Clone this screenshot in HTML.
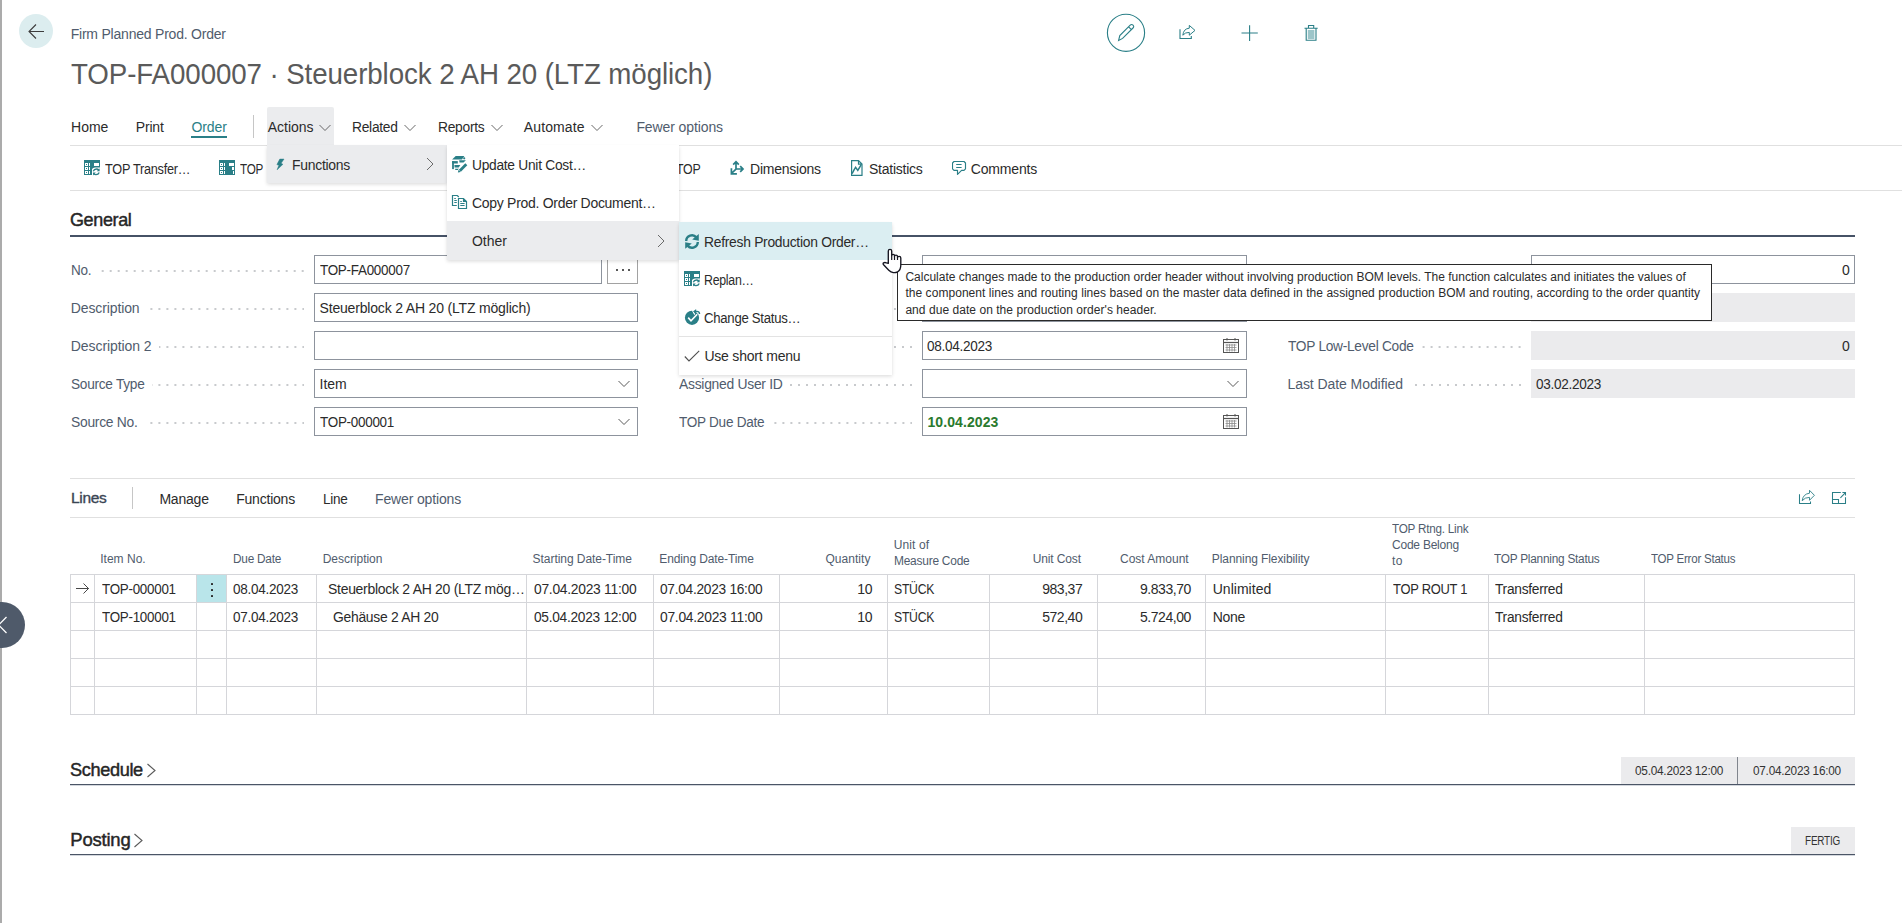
<!DOCTYPE html>
<html><head><meta charset="utf-8"><style>
html,body{margin:0;padding:0;background:#fff;width:1902px;height:923px;overflow:hidden;position:relative}
body{font-family:"Liberation Sans",sans-serif}
.t{position:absolute;white-space:nowrap}
.r{position:absolute}
</style></head><body>
<div class="r" style="left:0px;top:0px;width:2px;height:923px;background:#ababab"></div>
<div class="r" style="left:19px;top:14px;width:34px;height:34px;border-radius:50%;background:#dcedef"></div>
<svg class="r" style="left:27px;top:23px" width="18" height="17" viewBox="0 0 18 17"><path d="M2 8.5H17M9 1.5L2 8.5L9 15.5" fill="none" stroke="#3d3d3d" stroke-width="1.1"/></svg>
<div class="t" style="left:70.70px;top:24.65px;font-size:14px;line-height:18px;color:#505c6d;letter-spacing:-0.216px;">Firm Planned Prod. Order</div>
<div class="t" style="left:70.70px;top:53.90px;font-size:30px;line-height:39px;color:#5a5a5a;letter-spacing:-0.100px;transform:scaleX(0.9235);transform-origin:0 0;">TOP-FA000007 · Steuerblock 2 AH 20 (LTZ möglich)</div>
<svg class="r" style="left:1100px;top:8px" width="240" height="50" viewBox="0 0 240 50"><circle cx="26" cy="24.8" r="18.6" fill="none" stroke="#2a7f87" stroke-width="1.1"/><path d="M18.6 32.4L19.8 27.6L30.2 17.2Q31.6 15.8 33 17.2Q34.4 18.6 33 20L22.6 30.4Z M28.6 18.8L31.4 21.6" fill="none" stroke="#2a7f87" stroke-width="1.1"/><path d="M80 21.3V30.5H91.3V28" fill="none" stroke="#2a7f87" stroke-width="1.1"/><path d="M82.8 27.2Q83.6 20.6 89.3 20.2V17.4L95 22.4L89.3 27.2V24.4Q85.2 24.2 82.8 27.2Z" fill="none" stroke="#2a7f87" stroke-width="1" stroke-linejoin="miter"/><path d="M141.5 25H157.8M149.6 17.2V33" stroke="#2a7f87" stroke-width="1.1"/><path d="M204.5 20.3H217.7M208.5 20.3V17.5H213.7V20.3M206.2 20.3V32.3H216V20.3" fill="none" stroke="#2a7f87" stroke-width="1.1"/><rect x="207.8" y="22" width="6.6" height="9" fill="#9cc5c9"/></svg>
<div class="t" style="left:71.10px;top:117.75px;font-size:14px;line-height:18px;color:#2b2b2b;letter-spacing:-0.048px;">Home</div>
<div class="t" style="left:135.80px;top:117.75px;font-size:14px;line-height:18px;color:#2b2b2b;letter-spacing:-0.196px;">Print</div>
<div class="t" style="left:191.40px;top:117.75px;font-size:14px;line-height:18px;color:#2a7f87;letter-spacing:-0.071px;">Order</div>
<div class="r" style="left:191px;top:136px;width:36px;height:2px;background:#2a7f87"></div>
<div class="r" style="left:253px;top:115px;width:1px;height:23px;background:#c6c6c6"></div>
<div class="r" style="left:267px;top:107px;width:67px;height:38px;background:#ebecee;border-radius:2px 2px 0 0"></div>
<div class="t" style="left:267.70px;top:117.75px;font-size:14px;line-height:18px;color:#2b2b2b;letter-spacing:-0.002px;">Actions</div>
<div class="t" style="left:352.40px;top:117.75px;font-size:14px;line-height:18px;color:#2b2b2b;letter-spacing:-0.280px;transform:scaleX(0.9856);transform-origin:0 0;">Related</div>
<div class="t" style="left:437.50px;top:117.75px;font-size:14px;line-height:18px;color:#2b2b2b;letter-spacing:-0.280px;transform:scaleX(0.9865);transform-origin:0 0;">Reports</div>
<div class="t" style="left:523.80px;top:117.75px;font-size:14px;line-height:18px;color:#2b2b2b;letter-spacing:0.111px;">Automate</div>
<div class="t" style="left:636.40px;top:117.75px;font-size:14px;line-height:18px;color:#505c6d;letter-spacing:-0.102px;">Fewer options</div>
<svg class="r" style="left:319px;top:124px" width="12" height="8" viewBox="0 0 12 8"><path d="M0.5 1L6 6.5L11.5 1" fill="none" stroke="#585858" stroke-width="0.9"/></svg>
<svg class="r" style="left:404px;top:124px" width="12" height="8" viewBox="0 0 12 8"><path d="M0.5 1L6 6.5L11.5 1" fill="none" stroke="#585858" stroke-width="0.9"/></svg>
<svg class="r" style="left:491px;top:124px" width="12" height="8" viewBox="0 0 12 8"><path d="M0.5 1L6 6.5L11.5 1" fill="none" stroke="#585858" stroke-width="0.9"/></svg>
<svg class="r" style="left:591px;top:124px" width="12" height="8" viewBox="0 0 12 8"><path d="M0.5 1L6 6.5L11.5 1" fill="none" stroke="#585858" stroke-width="0.9"/></svg>
<div class="r" style="left:70px;top:145px;width:1832px;height:1px;background:#e0e0e0"></div>
<div class="r" style="left:70px;top:190px;width:1832px;height:1px;background:#e0e0e0"></div>
<div class="t" style="left:104.90px;top:160.15px;font-size:14px;line-height:18px;color:#2b2b2b;letter-spacing:-0.280px;transform:scaleX(0.9071);transform-origin:0 0;">TOP Transfer…</div>
<div class="t" style="left:239.50px;top:160.15px;font-size:14px;line-height:18px;color:#2b2b2b;letter-spacing:-0.280px;transform:scaleX(0.8332);transform-origin:0 0;">TOP</div>
<div class="t" style="left:676.00px;top:160.15px;font-size:14px;line-height:18px;color:#2b2b2b;letter-spacing:-0.280px;transform:scaleX(0.8832);transform-origin:0 0;">TOP</div>
<div class="t" style="left:750.00px;top:160.15px;font-size:14px;line-height:18px;color:#2b2b2b;letter-spacing:-0.226px;">Dimensions</div>
<div class="t" style="left:869.00px;top:160.15px;font-size:14px;line-height:18px;color:#2b2b2b;letter-spacing:-0.246px;">Statistics</div>
<div class="t" style="left:970.70px;top:160.15px;font-size:14px;line-height:18px;color:#2b2b2b;letter-spacing:-0.154px;">Comments</div>
<div class="t" style="left:70.30px;top:208.49px;font-size:18.5px;line-height:24px;color:#262626;letter-spacing:-0.370px;transform:scaleX(0.9718);transform-origin:0 0;-webkit-text-stroke:0.45px #262626;">General</div>
<div class="r" style="left:70px;top:235px;width:1785px;height:2px;background:#465266"></div>
<div class="t" style="left:70.80px;top:261.15px;font-size:14px;line-height:18px;color:#505c6d;letter-spacing:-0.280px;transform:scaleX(0.9658);transform-origin:0 0;">No.</div>
<div class="r" style="left:98.3px;top:270px;width:205.7px;height:2px;background-image:linear-gradient(90deg,transparent 6px,#c8cacd 6px);background-size:8px 2px;background-position:right top"></div>
<div class="r" style="left:314px;top:255px;width:286px;height:27px;background:#fff;border:1px solid #8d939d"></div>
<div class="r" style="left:607px;top:255px;width:29px;height:27px;background:#fff;border:1px solid #a2a2a2"></div>
<div class="r" style="left:615.8px;top:269.4px;width:1.9px;height:1.9px;background:#222;border-radius:50%"></div>
<div class="r" style="left:621.7px;top:269.4px;width:1.9px;height:1.9px;background:#222;border-radius:50%"></div>
<div class="r" style="left:627.7px;top:269.4px;width:1.9px;height:1.9px;background:#222;border-radius:50%"></div>
<div class="t" style="left:319.50px;top:261.15px;font-size:14px;line-height:18px;color:#2b2b2b;letter-spacing:-0.280px;transform:scaleX(0.9592);transform-origin:0 0;">TOP-FA000007</div>
<div class="t" style="left:70.80px;top:299.15px;font-size:14px;line-height:18px;color:#505c6d;letter-spacing:-0.122px;">Description</div>
<div class="r" style="left:146.6px;top:308px;width:157.4px;height:2px;background-image:linear-gradient(90deg,transparent 6px,#c8cacd 6px);background-size:8px 2px;background-position:right top"></div>
<div class="r" style="left:314px;top:293px;width:322px;height:27px;background:#fff;border:1px solid #8d939d"></div>
<div class="t" style="left:319.50px;top:299.15px;font-size:14px;line-height:18px;color:#2b2b2b;letter-spacing:-0.176px;">Steuerblock 2 AH 20 (LTZ möglich)</div>
<div class="t" style="left:70.80px;top:337.15px;font-size:14px;line-height:18px;color:#505c6d;letter-spacing:-0.075px;">Description 2</div>
<div class="r" style="left:158.6px;top:346px;width:145.4px;height:2px;background-image:linear-gradient(90deg,transparent 6px,#c8cacd 6px);background-size:8px 2px;background-position:right top"></div>
<div class="r" style="left:314px;top:331px;width:322px;height:27px;background:#fff;border:1px solid #8d939d"></div>
<div class="t" style="left:70.80px;top:375.15px;font-size:14px;line-height:18px;color:#505c6d;letter-spacing:-0.280px;transform:scaleX(0.9770);transform-origin:0 0;">Source Type</div>
<div class="r" style="left:151.6px;top:384px;width:152.4px;height:2px;background-image:linear-gradient(90deg,transparent 6px,#c8cacd 6px);background-size:8px 2px;background-position:right top"></div>
<div class="r" style="left:314px;top:369px;width:322px;height:27px;background:#fff;border:1px solid #8d939d"></div>
<div class="t" style="left:319.50px;top:375.15px;font-size:14px;line-height:18px;color:#2b2b2b;letter-spacing:-0.009px;">Item</div>
<svg class="r" style="left:618px;top:380px" width="12" height="8" viewBox="0 0 12 8"><path d="M0.5 1L6 6.5L11.5 1" fill="none" stroke="#5a5a5a" stroke-width="1"/></svg>
<div class="t" style="left:70.80px;top:413.15px;font-size:14px;line-height:18px;color:#505c6d;letter-spacing:-0.280px;transform:scaleX(0.9895);transform-origin:0 0;">Source No.</div>
<div class="r" style="left:144.6px;top:422px;width:159.4px;height:2px;background-image:linear-gradient(90deg,transparent 6px,#c8cacd 6px);background-size:8px 2px;background-position:right top"></div>
<div class="r" style="left:314px;top:407px;width:322px;height:27px;background:#fff;border:1px solid #8d939d"></div>
<div class="t" style="left:319.50px;top:413.15px;font-size:14px;line-height:18px;color:#2b2b2b;letter-spacing:-0.280px;transform:scaleX(0.9602);transform-origin:0 0;">TOP-000001</div>
<svg class="r" style="left:618px;top:418px" width="12" height="8" viewBox="0 0 12 8"><path d="M0.5 1L6 6.5L11.5 1" fill="none" stroke="#5a5a5a" stroke-width="1"/></svg>
<div class="r" style="left:922px;top:255px;width:323px;height:27px;background:#fff;border:1px solid #8d939d"></div>
<div class="r" style="left:1118px;top:264px;width:1px;height:1px;background:#777"></div>
<div class="r" style="left:1121px;top:264px;width:1px;height:1px;background:#777"></div>
<div class="r" style="left:922px;top:293px;width:323px;height:27px;background:#fff;border:1px solid #8d939d"></div>
<div class="r" style="left:880.0px;top:346px;width:32.0px;height:2px;background-image:linear-gradient(90deg,transparent 6px,#c8cacd 6px);background-size:8px 2px;background-position:right top"></div>
<div class="r" style="left:880.0px;top:308px;width:32.0px;height:2px;background-image:linear-gradient(90deg,transparent 6px,#c8cacd 6px);background-size:8px 2px;background-position:right top"></div>
<div class="r" style="left:922px;top:331px;width:323px;height:27px;background:#fff;border:1px solid #8d939d"></div>
<div class="t" style="left:927.40px;top:336.55px;font-size:14px;line-height:18px;color:#2b2b2b;letter-spacing:-0.280px;transform:scaleX(0.9668);transform-origin:0 0;">08.04.2023</div>
<svg class="r" style="left:1223px;top:338px" width="16" height="15" viewBox="0 0 16 15"><rect x="0.5" y="1.5" width="15" height="13" fill="none" stroke="#555" stroke-width="1"/><path d="M0.5 4.5H15.5" stroke="#555" stroke-width="1.2"/><path d="M4 0V2.5M12 0V2.5" stroke="#555"/><path d="M2.5 7h11M2.5 9.5h11M2.5 12h11" stroke="#8a8a8a" stroke-width="0.8"/><path d="M4 6v7.5M6.5 6v7.5M9 6v7.5M11.5 6v7.5" stroke="#8a8a8a" stroke-width="0.8"/></svg>
<div class="t" style="left:679.10px;top:375.15px;font-size:14px;line-height:18px;color:#505c6d;letter-spacing:-0.280px;transform:scaleX(0.9921);transform-origin:0 0;">Assigned User ID</div>
<div class="r" style="left:790.0px;top:384px;width:122.0px;height:2px;background-image:linear-gradient(90deg,transparent 6px,#c8cacd 6px);background-size:8px 2px;background-position:right top"></div>
<div class="r" style="left:922px;top:369px;width:323px;height:27px;background:#fff;border:1px solid #8d939d"></div>
<svg class="r" style="left:1227px;top:380px" width="12" height="8" viewBox="0 0 12 8"><path d="M0.5 1L6 6.5L11.5 1" fill="none" stroke="#5a5a5a" stroke-width="1"/></svg>
<div class="t" style="left:679.10px;top:413.05px;font-size:14px;line-height:18px;color:#505c6d;letter-spacing:-0.280px;transform:scaleX(0.9691);transform-origin:0 0;">TOP Due Date</div>
<div class="r" style="left:771.6px;top:422px;width:140.4px;height:2px;background-image:linear-gradient(90deg,transparent 6px,#c8cacd 6px);background-size:8px 2px;background-position:right top"></div>
<div class="r" style="left:922px;top:407px;width:323px;height:27px;background:#fff;border:1px solid #8d939d"></div>
<div class="t" style="left:927.40px;top:413.05px;font-size:14px;line-height:18px;color:#2a7a2e;font-weight:bold;letter-spacing:0.104px;">10.04.2023</div>
<svg class="r" style="left:1223px;top:414px" width="16" height="15" viewBox="0 0 16 15"><rect x="0.5" y="1.5" width="15" height="13" fill="none" stroke="#555" stroke-width="1"/><path d="M0.5 4.5H15.5" stroke="#555" stroke-width="1.2"/><path d="M4 0V2.5M12 0V2.5" stroke="#555"/><path d="M2.5 7h11M2.5 9.5h11M2.5 12h11" stroke="#8a8a8a" stroke-width="0.8"/><path d="M4 6v7.5M6.5 6v7.5M9 6v7.5M11.5 6v7.5" stroke="#8a8a8a" stroke-width="0.8"/></svg>
<div class="r" style="left:1531px;top:255px;width:322px;height:27px;background:#fff;border:1px solid #8d939d"></div>
<div class="t" style="left:1841.91px;top:260.95px;font-size:14px;line-height:18px;color:#2b2b2b;">0</div>
<div class="r" style="left:1531px;top:293px;width:324px;height:29px;background:#ebebed"></div>
<div class="t" style="left:1287.50px;top:336.85px;font-size:14px;line-height:18px;color:#505c6d;letter-spacing:-0.280px;transform:scaleX(0.9793);transform-origin:0 0;">TOP Low-Level Code</div>
<div class="r" style="left:1420.4px;top:346px;width:100.6px;height:2px;background-image:linear-gradient(90deg,transparent 6px,#c8cacd 6px);background-size:8px 2px;background-position:right top"></div>
<div class="r" style="left:1531px;top:331px;width:324px;height:29px;background:#ebebed"></div>
<div class="t" style="left:1841.91px;top:336.85px;font-size:14px;line-height:18px;color:#2b2b2b;">0</div>
<div class="t" style="left:1287.50px;top:374.85px;font-size:14px;line-height:18px;color:#505c6d;letter-spacing:-0.072px;">Last Date Modified</div>
<div class="r" style="left:1410.0px;top:384px;width:111.0px;height:2px;background-image:linear-gradient(90deg,transparent 6px,#c8cacd 6px);background-size:8px 2px;background-position:right top"></div>
<div class="r" style="left:1531px;top:369px;width:324px;height:29px;background:#ebebed"></div>
<div class="t" style="left:1535.90px;top:374.85px;font-size:14px;line-height:18px;color:#2b2b2b;letter-spacing:-0.280px;transform:scaleX(0.9683);transform-origin:0 0;">03.02.2023</div>
<div class="r" style="left:70px;top:478px;width:1785px;height:1px;background:#e0e0e0"></div>
<div class="t" style="left:70.60px;top:488.43px;font-size:15.5px;line-height:20px;color:#3a4553;letter-spacing:-0.310px;transform:scaleX(0.9997);transform-origin:0 0;-webkit-text-stroke:0.35px #3a4553;">Lines</div>
<div class="r" style="left:132px;top:487px;width:1px;height:22px;background:#c6c6c6"></div>
<div class="t" style="left:159.40px;top:489.95px;font-size:14px;line-height:18px;color:#2b2b2b;letter-spacing:-0.198px;">Manage</div>
<div class="t" style="left:236.20px;top:489.95px;font-size:14px;line-height:18px;color:#2b2b2b;letter-spacing:-0.212px;">Functions</div>
<div class="t" style="left:322.70px;top:489.95px;font-size:14px;line-height:18px;color:#2b2b2b;letter-spacing:-0.280px;transform:scaleX(0.9677);transform-origin:0 0;">Line</div>
<div class="t" style="left:375.00px;top:489.95px;font-size:14px;line-height:18px;color:#505c6d;letter-spacing:-0.144px;">Fewer options</div>
<div class="r" style="left:70px;top:517px;width:1785px;height:1px;background:#e0e0e0"></div>
<svg class="r" style="left:1796px;top:489px" width="54" height="18" viewBox="0 0 54 18"><path d="M3.5 5.2V14.5H14.5V12.4" fill="none" stroke="#2a7f87" stroke-width="1.05"/><path d="M6.2 11.7Q7 5 13.5 4.2V1.3L18.4 6.3L13.5 11.3V8.4Q9 8.2 6.2 11.7Z" fill="none" stroke="#2a7f87" stroke-width="0.9" stroke-linejoin="miter"/><path d="M44.8 3.5H36.5V14.5H49.5V8.2M36.5 10.5H42.5V14.5M44.4 8.9L49 4.1M46.4 3.5H50M49.5 3V6.6" fill="none" stroke="#2a7f87" stroke-width="1.05"/></svg>
<div class="t" style="left:100.20px;top:550.64px;font-size:12px;line-height:16px;color:#505c6d;letter-spacing:0.022px;">Item No.</div>
<div class="t" style="left:232.90px;top:550.64px;font-size:12px;line-height:16px;color:#505c6d;letter-spacing:-0.240px;transform:scaleX(0.9855);transform-origin:0 0;">Due Date</div>
<div class="t" style="left:322.70px;top:550.64px;font-size:12px;line-height:16px;color:#505c6d;letter-spacing:-0.032px;">Description</div>
<div class="t" style="left:532.60px;top:550.64px;font-size:12px;line-height:16px;color:#505c6d;letter-spacing:-0.056px;">Starting Date-Time</div>
<div class="t" style="left:659.30px;top:550.64px;font-size:12px;line-height:16px;color:#505c6d;letter-spacing:-0.117px;">Ending Date-Time</div>
<div class="t" style="left:825.50px;top:550.64px;font-size:12px;line-height:16px;color:#505c6d;letter-spacing:0.030px;">Quantity</div>
<div class="t" style="left:893.70px;top:536.64px;font-size:12px;line-height:16px;color:#505c6d;letter-spacing:0.103px;">Unit of</div>
<div class="t" style="left:893.70px;top:552.54px;font-size:12px;line-height:16px;color:#505c6d;letter-spacing:-0.240px;transform:scaleX(0.9952);transform-origin:0 0;">Measure Code</div>
<div class="t" style="left:1032.80px;top:550.64px;font-size:12px;line-height:16px;color:#505c6d;letter-spacing:-0.143px;">Unit Cost</div>
<div class="t" style="left:1120.00px;top:550.64px;font-size:12px;line-height:16px;color:#505c6d;letter-spacing:0.000px;">Cost Amount</div>
<div class="t" style="left:1211.80px;top:550.64px;font-size:12px;line-height:16px;color:#505c6d;letter-spacing:-0.088px;">Planning Flexibility</div>
<div class="t" style="left:1392.00px;top:520.54px;font-size:12px;line-height:16px;color:#505c6d;letter-spacing:-0.240px;transform:scaleX(0.9749);transform-origin:0 0;">TOP Rtng. Link</div>
<div class="t" style="left:1392.00px;top:537.24px;font-size:12px;line-height:16px;color:#505c6d;letter-spacing:-0.228px;">Code Belong</div>
<div class="t" style="left:1392.00px;top:553.14px;font-size:12px;line-height:16px;color:#505c6d;letter-spacing:0.293px;">to</div>
<div class="t" style="left:1493.90px;top:550.64px;font-size:12px;line-height:16px;color:#505c6d;letter-spacing:-0.240px;transform:scaleX(0.9851);transform-origin:0 0;">TOP Planning Status</div>
<div class="t" style="left:1650.50px;top:550.64px;font-size:12px;line-height:16px;color:#505c6d;letter-spacing:-0.240px;transform:scaleX(0.9604);transform-origin:0 0;">TOP Error Status</div>
<div class="r" style="left:70px;top:574px;width:1785px;height:1px;background:#d5d6da"></div>
<div class="r" style="left:70px;top:602px;width:1785px;height:1px;background:#d5d6da"></div>
<div class="r" style="left:70px;top:630px;width:1785px;height:1px;background:#d5d6da"></div>
<div class="r" style="left:70px;top:658px;width:1785px;height:1px;background:#d5d6da"></div>
<div class="r" style="left:70px;top:686px;width:1785px;height:1px;background:#d5d6da"></div>
<div class="r" style="left:70px;top:714px;width:1785px;height:1px;background:#d5d6da"></div>
<div class="r" style="left:70px;top:574px;width:1px;height:141px;background:#d5d6da"></div>
<div class="r" style="left:94px;top:574px;width:1px;height:141px;background:#d5d6da"></div>
<div class="r" style="left:196px;top:574px;width:1px;height:141px;background:#d5d6da"></div>
<div class="r" style="left:226px;top:574px;width:1px;height:141px;background:#d5d6da"></div>
<div class="r" style="left:316px;top:574px;width:1px;height:141px;background:#d5d6da"></div>
<div class="r" style="left:526px;top:574px;width:1px;height:141px;background:#d5d6da"></div>
<div class="r" style="left:653px;top:574px;width:1px;height:141px;background:#d5d6da"></div>
<div class="r" style="left:779px;top:574px;width:1px;height:141px;background:#d5d6da"></div>
<div class="r" style="left:887px;top:574px;width:1px;height:141px;background:#d5d6da"></div>
<div class="r" style="left:989px;top:574px;width:1px;height:141px;background:#d5d6da"></div>
<div class="r" style="left:1097px;top:574px;width:1px;height:141px;background:#d5d6da"></div>
<div class="r" style="left:1205px;top:574px;width:1px;height:141px;background:#d5d6da"></div>
<div class="r" style="left:1385px;top:574px;width:1px;height:141px;background:#d5d6da"></div>
<div class="r" style="left:1488px;top:574px;width:1px;height:141px;background:#d5d6da"></div>
<div class="r" style="left:1644px;top:574px;width:1px;height:141px;background:#d5d6da"></div>
<div class="r" style="left:1854px;top:574px;width:1px;height:141px;background:#d5d6da"></div>
<div class="r" style="left:197px;top:575px;width:29px;height:27px;background:#b9e5ea"></div>
<div class="r" style="left:211px;top:583.4px;width:2px;height:2px;background:#2b2b2b;border-radius:0.5px"></div>
<div class="r" style="left:211px;top:589.1px;width:2px;height:2px;background:#2b2b2b;border-radius:0.5px"></div>
<div class="r" style="left:211px;top:594.8px;width:2px;height:2px;background:#2b2b2b;border-radius:0.5px"></div>
<svg class="r" style="left:75px;top:582px" width="16" height="14" viewBox="0 0 16 14"><path d="M1 6.5H13.5M8.5 1.5L13.5 6.5L8.5 11.5" fill="none" stroke="#333" stroke-width="0.9"/></svg>
<div class="t" style="left:102.00px;top:579.85px;font-size:14px;line-height:18px;color:#2b2b2b;letter-spacing:-0.280px;transform:scaleX(0.9563);transform-origin:0 0;">TOP-000001</div>
<div class="t" style="left:233.30px;top:579.85px;font-size:14px;line-height:18px;color:#2b2b2b;letter-spacing:-0.280px;transform:scaleX(0.9653);transform-origin:0 0;">08.04.2023</div>
<div class="t" style="left:327.60px;top:579.85px;font-size:14px;line-height:18px;color:#2b2b2b;letter-spacing:-0.280px;transform:scaleX(0.9979);transform-origin:0 0;">Steuerblock 2 AH 20 (LTZ mög…</div>
<div class="t" style="left:533.70px;top:579.85px;font-size:14px;line-height:18px;color:#2b2b2b;letter-spacing:-0.280px;transform:scaleX(0.9890);transform-origin:0 0;">07.04.2023 11:00</div>
<div class="t" style="left:660.00px;top:579.85px;font-size:14px;line-height:18px;color:#2b2b2b;letter-spacing:-0.280px;transform:scaleX(0.9792);transform-origin:0 0;">07.04.2023 16:00</div>
<div class="t" style="left:857.33px;top:579.85px;font-size:14px;line-height:18px;color:#2b2b2b;letter-spacing:-0.300px;">10</div>
<div class="t" style="left:894.40px;top:579.85px;font-size:14px;line-height:18px;color:#2b2b2b;letter-spacing:-0.280px;transform:scaleX(0.8720);transform-origin:0 0;">STÜCK</div>
<div class="t" style="left:1042.13px;top:579.85px;font-size:14px;line-height:18px;color:#2b2b2b;letter-spacing:-0.450px;">983,37</div>
<div class="t" style="left:1139.96px;top:579.85px;font-size:14px;line-height:18px;color:#2b2b2b;letter-spacing:-0.450px;">9.833,70</div>
<div class="t" style="left:1212.70px;top:579.85px;font-size:14px;line-height:18px;color:#2b2b2b;letter-spacing:0.031px;">Unlimited</div>
<div class="t" style="left:1392.90px;top:579.85px;font-size:14px;line-height:18px;color:#2b2b2b;letter-spacing:-0.280px;transform:scaleX(0.9229);transform-origin:0 0;">TOP ROUT 1</div>
<div class="t" style="left:1495.30px;top:579.85px;font-size:14px;line-height:18px;color:#2b2b2b;letter-spacing:-0.280px;transform:scaleX(0.9821);transform-origin:0 0;">Transferred</div>
<div class="t" style="left:102.00px;top:607.85px;font-size:14px;line-height:18px;color:#2b2b2b;letter-spacing:-0.280px;transform:scaleX(0.9563);transform-origin:0 0;">TOP-100001</div>
<div class="t" style="left:233.30px;top:607.85px;font-size:14px;line-height:18px;color:#2b2b2b;letter-spacing:-0.280px;transform:scaleX(0.9653);transform-origin:0 0;">07.04.2023</div>
<div class="t" style="left:333.40px;top:607.85px;font-size:14px;line-height:18px;color:#2b2b2b;letter-spacing:-0.280px;transform:scaleX(0.9916);transform-origin:0 0;">Gehäuse 2 AH 20</div>
<div class="t" style="left:533.70px;top:607.85px;font-size:14px;line-height:18px;color:#2b2b2b;letter-spacing:-0.280px;transform:scaleX(0.9792);transform-origin:0 0;">05.04.2023 12:00</div>
<div class="t" style="left:660.00px;top:607.85px;font-size:14px;line-height:18px;color:#2b2b2b;letter-spacing:-0.280px;transform:scaleX(0.9890);transform-origin:0 0;">07.04.2023 11:00</div>
<div class="t" style="left:857.33px;top:607.85px;font-size:14px;line-height:18px;color:#2b2b2b;letter-spacing:-0.300px;">10</div>
<div class="t" style="left:894.40px;top:607.85px;font-size:14px;line-height:18px;color:#2b2b2b;letter-spacing:-0.280px;transform:scaleX(0.8720);transform-origin:0 0;">STÜCK</div>
<div class="t" style="left:1042.13px;top:607.85px;font-size:14px;line-height:18px;color:#2b2b2b;letter-spacing:-0.450px;">572,40</div>
<div class="t" style="left:1139.96px;top:607.85px;font-size:14px;line-height:18px;color:#2b2b2b;letter-spacing:-0.450px;">5.724,00</div>
<div class="t" style="left:1212.70px;top:607.85px;font-size:14px;line-height:18px;color:#2b2b2b;letter-spacing:-0.256px;">None</div>
<div class="t" style="left:1495.30px;top:607.85px;font-size:14px;line-height:18px;color:#2b2b2b;letter-spacing:-0.280px;transform:scaleX(0.9821);transform-origin:0 0;">Transferred</div>
<div class="r" style="left:-21px;top:602px;width:46px;height:46px;border-radius:50%;background:#4f5a6a"></div>
<svg class="r" style="left:-2px;top:616px" width="10" height="18" viewBox="0 0 10 18"><path d="M8.5 1L0.6 9L8.5 17" fill="none" stroke="#fff" stroke-width="1.3"/></svg>
<div class="t" style="left:70.30px;top:757.59px;font-size:18.5px;line-height:24px;color:#262626;letter-spacing:-0.370px;transform:scaleX(0.9819);transform-origin:0 0;-webkit-text-stroke:0.45px #262626;">Schedule</div>
<svg class="r" style="left:146px;top:763px" width="11" height="16" viewBox="0 0 11 16"><path d="M1.5 1L9 7.5L1.5 14" fill="none" stroke="#5a5a5a" stroke-width="1.1"/></svg>
<div class="r" style="left:70px;top:784px;width:1785px;height:1px;background:#4b5566"></div>
<div class="r" style="left:70px;top:785px;width:1785px;height:1px;background:#d3d7dd"></div>
<div class="r" style="left:1621px;top:757px;width:116px;height:27px;background:#ebebed"></div>
<div class="r" style="left:1737px;top:757px;width:1px;height:27px;background:#80858d"></div>
<div class="r" style="left:1738px;top:757px;width:117px;height:27px;background:#ebebed"></div>
<div class="t" style="left:1634.60px;top:762.54px;font-size:12.3px;line-height:16px;color:#333;letter-spacing:-0.246px;transform:scaleX(0.9603);transform-origin:0 0;">05.04.2023 12:00</div>
<div class="t" style="left:1752.60px;top:762.54px;font-size:12.3px;line-height:16px;color:#333;letter-spacing:-0.246px;transform:scaleX(0.9570);transform-origin:0 0;">07.04.2023 16:00</div>
<div class="t" style="left:70.30px;top:828.29px;font-size:18.5px;line-height:24px;color:#262626;letter-spacing:-0.217px;-webkit-text-stroke:0.45px #262626;">Posting</div>
<svg class="r" style="left:133px;top:833px" width="11" height="16" viewBox="0 0 11 16"><path d="M1.5 1L9 7.5L1.5 14" fill="none" stroke="#5a5a5a" stroke-width="1.1"/></svg>
<div class="r" style="left:70px;top:854px;width:1785px;height:1px;background:#4b5566"></div>
<div class="r" style="left:70px;top:855px;width:1785px;height:1px;background:#d3d7dd"></div>
<div class="r" style="left:1791px;top:827px;width:64px;height:27px;background:#ebebed"></div>
<div class="t" style="left:1805.40px;top:832.54px;font-size:12.3px;line-height:16px;color:#333;letter-spacing:-0.246px;transform:scaleX(0.8088);transform-origin:0 0;">FERTIG</div>
<svg class="r" style="left:84px;top:160px" width="17" height="16" viewBox="0 0 17 16"><rect x="0" y="0" width="16" height="15" fill="#2a7f87"/><rect x="1" y="3" width="3" height="3" fill="#fff"/><rect x="2" y="4" width="1" height="1" fill="#2a7f87"/><rect x="5" y="3" width="1" height="3" fill="#fff"/><rect x="1" y="7" width="3" height="3" fill="#fff"/><rect x="2" y="8" width="1" height="1" fill="#2a7f87"/><rect x="5" y="7" width="1" height="3" fill="#fff"/><rect x="1" y="11" width="3" height="3" fill="#fff"/><rect x="2" y="12" width="1" height="1" fill="#2a7f87"/><rect x="5" y="11" width="1" height="3" fill="#fff"/><rect x="10" y="3" width="5" height="3" fill="#fff"/><path d="M8 16V9Q9 7.6 11 7.5H17V16Z" fill="#fff"/><path d="M9.3 11.2Q10 9 12.5 9Q14 9 14.8 10" fill="none" stroke="#2a7f87" stroke-width="1.3"/><path d="M15.6 8.3V11.2H12.8Z" fill="#2a7f87"/><path d="M15.2 12.6Q14.4 14.7 12 14.7Q10.5 14.7 9.7 13.7" fill="none" stroke="#2a7f87" stroke-width="1.3"/><path d="M9 15.4V12.5H11.8Z" fill="#2a7f87"/></svg>
<svg class="r" style="left:219px;top:160px" width="17" height="16" viewBox="0 0 17 16"><rect x="0" y="0" width="16" height="15" fill="#2a7f87"/><rect x="1" y="3" width="3" height="3" fill="#fff"/><rect x="2" y="4" width="1" height="1" fill="#2a7f87"/><rect x="5" y="3" width="1" height="3" fill="#fff"/><rect x="1" y="7" width="3" height="3" fill="#fff"/><rect x="2" y="8" width="1" height="1" fill="#2a7f87"/><rect x="5" y="7" width="1" height="3" fill="#fff"/><rect x="1" y="11" width="3" height="3" fill="#fff"/><rect x="2" y="12" width="1" height="1" fill="#2a7f87"/><rect x="5" y="11" width="1" height="3" fill="#fff"/><rect x="10" y="3" width="5" height="3" fill="#fff"/><rect x="13" y="7" width="2" height="3" fill="#fff"/><rect x="14" y="11" width="1" height="3" fill="#fff"/></svg>
<svg class="r" style="left:730px;top:160px" width="15" height="16" viewBox="0 0 15 16"><path d="M6 9.6V1.8M3.2 4.6L6 1.7L8.8 4.6M5.2 9H12.6M10.2 6.2L13 9L10.2 11.8M6.2 8.8L2 13M1.4 8.2V13.8H6.9" fill="none" stroke="#2a7f87" stroke-width="1.7"/></svg>
<svg class="r" style="left:851px;top:160px" width="13" height="17" viewBox="0 0 13 17"><path d="M0.6 0.6H7.5L11 4.1V15.4H0.6Z M7.5 0.6V4.2H11" fill="none" stroke="#2a7f87" stroke-width="1.2"/><path d="M1.1 13.6L2.9 10.2L4.6 7.4L6.8 10.4L8.9 7L10.2 4.3" fill="none" stroke="#2a7f87" stroke-width="1.5"/></svg>
<svg class="r" style="left:952px;top:161px" width="15" height="15" viewBox="0 0 15 15"><path d="M2 0.5H12L13.5 2V7.8L12 9.3H9.6L5.5 13.4V9.3H2L0.5 7.8V2Z" fill="none" stroke="#2a7f87" stroke-width="1.15" stroke-linejoin="round"/><path d="M4.2 3.5H9.6M4.2 6.5H9.6" stroke="#2a7f87" stroke-width="1.1"/></svg>
<div class="r" style="left:267px;top:145px;width:180px;height:38px;background:#ebecee;box-shadow:0 1.6px 3.6px rgba(0,0,0,0.14),0 0.3px 0.9px rgba(0,0,0,0.11)"></div>
<svg class="r" style="left:275px;top:157px" width="10" height="14" viewBox="0 0 10 14"><path d="M4.8 2.1H9L6.1 6.3L7.9 7.3L2.1 12.8L3.9 8.3L1.9 7.6Z" fill="#2a7f87" stroke="#2a7f87" stroke-width="0.5" stroke-linejoin="round"/></svg>
<div class="t" style="left:292.30px;top:155.85px;font-size:14px;line-height:18px;color:#2b2b2b;letter-spacing:-0.280px;transform:scaleX(0.9957);transform-origin:0 0;">Functions</div>
<svg class="r" style="left:426px;top:157px" width="8" height="14" viewBox="0 0 8 14"><path d="M1 1L7 7L1 13" fill="none" stroke="#6a6a6a" stroke-width="1"/></svg>
<div class="r" style="left:447px;top:145px;width:232px;height:115px;background:#fff;box-shadow:0 1.6px 3.6px rgba(0,0,0,0.14),0 0.3px 0.9px rgba(0,0,0,0.11)"></div>
<div class="r" style="left:447px;top:221px;width:232px;height:39px;background:#ebecee"></div>
<div class="t" style="left:472.00px;top:155.95px;font-size:14px;line-height:18px;color:#2b2b2b;letter-spacing:-0.280px;transform:scaleX(0.9835);transform-origin:0 0;">Update Unit Cost…</div>
<div class="t" style="left:472.00px;top:194.15px;font-size:14px;line-height:18px;color:#2b2b2b;letter-spacing:-0.280px;transform:scaleX(0.9979);transform-origin:0 0;">Copy Prod. Order Document…</div>
<div class="t" style="left:472.00px;top:232.35px;font-size:14px;line-height:18px;color:#2b2b2b;letter-spacing:-0.028px;">Other</div>
<svg class="r" style="left:657px;top:234px" width="8" height="14" viewBox="0 0 8 14"><path d="M1 1L7 7L1 13" fill="none" stroke="#6a6a6a" stroke-width="1"/></svg>
<svg class="r" style="left:451px;top:156px" width="18" height="18" viewBox="0 0 18 18"><path d="M4.7 0.1H13.4L11 3.4H1.1Z" fill="#2a7f87"/><circle cx="13.2" cy="2.3" r="1.1" fill="#2a7f87"/><rect x="1.1" y="5.1" width="5.7" height="2.4" fill="#2a7f87"/><rect x="1.1" y="5.1" width="1.8" height="8" fill="#2a7f87"/><path d="M8.2 4.3H14.9L12.5 6.6H8.5Z" fill="#2a7f87"/><path d="M3.4 9.1H9.4L7.7 11.6H3.6Z" fill="#2a7f87"/><path d="M4.1 12.7H8L7.3 13.9H4.3Z" fill="#2a7f87"/><path d="M8.6 15L15.4 8.2" stroke="#fff" stroke-width="4.4"/><path d="M8.9 14.7L15.3 8.3" stroke="#2a7f87" stroke-width="2.8"/><path d="M6.9 16.6L7.6 13.8L9.7 15.9Z" fill="#2a7f87"/></svg>
<svg class="r" style="left:451px;top:194px" width="17" height="17" viewBox="0 0 17 17"><path d="M5.8 11.5H1.5V1.5H6.3L7.8 3" fill="none" stroke="#2a7f87" stroke-width="1.2"/><path d="M3.3 4.5H4.8M3.3 6.5H5.8M3.3 8.5H5.8" stroke="#2a7f87" stroke-width="1.1"/><path d="M7.5 4.5H12.5L15.5 7.5V14.5H7.5Z M12.5 4.5V7.5H15.5" fill="none" stroke="#2a7f87" stroke-width="1.2"/><path d="M9.3 7.5H10.8M9.3 9.5H13.6M9.3 11.5H13.6" stroke="#2a7f87" stroke-width="1.1"/></svg>
<div class="r" style="left:679px;top:222px;width:213px;height:153px;background:#fff;box-shadow:0 1.6px 3.6px rgba(0,0,0,0.14),0 0.3px 0.9px rgba(0,0,0,0.11)"></div>
<div class="r" style="left:679px;top:222px;width:213px;height:38px;background:#dbeef2"></div>
<div class="r" style="left:679px;top:336px;width:213px;height:1px;background:#e3e3e3"></div>
<div class="t" style="left:704.40px;top:233.35px;font-size:14px;line-height:18px;color:#2b2b2b;letter-spacing:-0.280px;transform:scaleX(0.9893);transform-origin:0 0;">Refresh Production Order…</div>
<div class="t" style="left:704.40px;top:271.15px;font-size:14px;line-height:18px;color:#2b2b2b;letter-spacing:-0.280px;transform:scaleX(0.8803);transform-origin:0 0;">Replan…</div>
<div class="t" style="left:704.40px;top:308.85px;font-size:14px;line-height:18px;color:#2b2b2b;letter-spacing:-0.280px;transform:scaleX(0.9391);transform-origin:0 0;">Change Status…</div>
<div class="t" style="left:704.40px;top:346.85px;font-size:14px;line-height:18px;color:#2b2b2b;letter-spacing:-0.201px;">Use short menu</div>
<svg class="r" style="left:684px;top:233px" width="16" height="17" viewBox="0 0 16 17"><path d="M2.2 8.1A5.8 5.8 0 0 1 12.4 4.4M13.8 8.9A5.8 5.8 0 0 1 3.6 12.6" fill="none" stroke="#2a7f87" stroke-width="2.4"/><path d="M14.8 1V7.8L8.2 6.5Z M1.2 9.2V15.8L7.8 10.5Z" fill="#2a7f87"/></svg>
<svg class="r" style="left:684px;top:271px" width="17" height="16" viewBox="0 0 17 16"><rect x="0" y="0" width="16" height="15" fill="#2a7f87"/><rect x="1" y="3" width="3" height="3" fill="#fff"/><rect x="2" y="4" width="1" height="1" fill="#2a7f87"/><rect x="5" y="3" width="1" height="3" fill="#fff"/><rect x="1" y="7" width="3" height="3" fill="#fff"/><rect x="2" y="8" width="1" height="1" fill="#2a7f87"/><rect x="5" y="7" width="1" height="3" fill="#fff"/><rect x="1" y="11" width="3" height="3" fill="#fff"/><rect x="2" y="12" width="1" height="1" fill="#2a7f87"/><rect x="5" y="11" width="1" height="3" fill="#fff"/><rect x="10" y="3" width="5" height="3" fill="#fff"/><path d="M8 16V9Q9 7.6 11 7.5H17V16Z" fill="#fff"/><path d="M9.3 11.2Q10 9 12.5 9Q14 9 14.8 10" fill="none" stroke="#2a7f87" stroke-width="1.3"/><path d="M15.6 8.3V11.2H12.8Z" fill="#2a7f87"/><path d="M15.2 12.6Q14.4 14.7 12 14.7Q10.5 14.7 9.7 13.7" fill="none" stroke="#2a7f87" stroke-width="1.3"/><path d="M9 15.4V12.5H11.8Z" fill="#2a7f87"/></svg>
<svg class="r" style="left:684px;top:308px" width="17" height="18" viewBox="0 0 17 18"><circle cx="8" cy="9.8" r="7.1" fill="#2a7f87"/><path d="M10.5 1.5L14 6L17 3Z" fill="#fff"/><path d="M8.3 2.3L10.8 6.6" stroke="#fff" stroke-width="1.1"/><path d="M4.2 9.6L7 12.8L13.2 6.3" fill="none" stroke="#fff" stroke-width="1.6"/><path d="M9.8 3.4H13Q15.3 3.4 15.6 6" fill="none" stroke="#2a7f87" stroke-width="1.4"/><path d="M9.3 3.4L12.1 0.9V5.9Z" fill="#2a7f87"/></svg>
<svg class="r" style="left:684px;top:350px" width="16" height="12" viewBox="0 0 16 12"><path d="M0.8 6.5L5 11L15.2 0.8" fill="none" stroke="#505050" stroke-width="1.1"/></svg>
<div class="r" style="left:897px;top:264px;width:813px;height:55px;background:#fff;border:1px solid #2a2a2a"></div>
<div class="t" style="left:905.40px;top:269.14px;font-size:12px;line-height:16px;color:#2b2b2b;letter-spacing:0.001px;">Calculate changes made to the production order header without involving production BOM levels. The function calculates and initiates the values of</div>
<div class="t" style="left:905.40px;top:285.44px;font-size:12px;line-height:16px;color:#2b2b2b;letter-spacing:0.052px;">the component lines and routing lines based on the master data defined in the assigned production BOM and routing, according to the order quantity</div>
<div class="t" style="left:905.40px;top:301.64px;font-size:12px;line-height:16px;color:#2b2b2b;letter-spacing:0.048px;">and due date on the production order's header.</div>
<svg class="r" style="left:878px;top:245px" width="26" height="30" viewBox="0 0 26 30"><path d="M10.3 18.4V6Q10.3 4.3 12 4.3Q13.7 4.3 13.7 6V10.5Q13.7 9.3 15.1 9.3Q16.5 9.3 16.5 10.6V11.3Q16.5 10.1 18 10.1Q19.5 10.1 19.5 11.4V12.6Q19.5 11.4 21.1 11.4Q22.8 11.4 22.8 13.1V20Q22.8 25 19.5 27Q17.5 27.8 15.5 27.6Q12.8 27.2 10.8 25.2L5.6 19.8Q4.6 18.6 5.6 17.9Q6.9 17 8.4 17.9Z" fill="#fff" stroke="#151520" stroke-width="1.35" stroke-linejoin="round"/><path d="M13.7 10.5V15M16.5 11.2V15M19.5 12.5V15" stroke="#151520" stroke-width="1.2"/></svg>
</body></html>
